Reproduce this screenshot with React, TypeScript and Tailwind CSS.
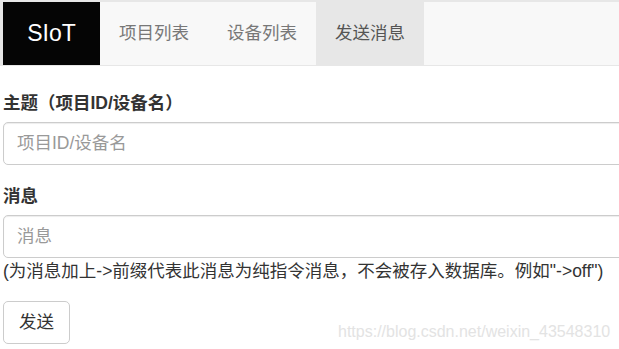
import React from "react";

const font = { fontFamily: '"Liberation Sans", Arial, "Noto Sans CJK SC", sans-serif' };

export default function App() {
  const tabs = ["项目列表", "设备列表", "发送消息"];
  return (
    <div className="relative w-[619px] h-[349px] overflow-hidden bg-white text-[#333]" style={font}>
      {/* navbar */}
      <div className="flex h-[66px] bg-[#f8f8f8] border-t-2 border-b border-l-[3px] border-[#e7e7e7]">
        <div className="flex w-[97px] items-center justify-center bg-[#050505] text-[23px] text-white">SIoT</div>
        {tabs.map((t, i) => (
          <div
            key={t}
            className={
              i === 2
                ? "flex w-[108px] items-center justify-center bg-[#e7e7e7] text-[17.5px] text-[#555]"
                : "flex w-[108px] items-center justify-center text-[17.5px] text-[#777]"
            }
          >
            {t}
          </div>
        ))}
      </div>

      <div className="flex flex-col px-[3px] pt-[25px]">
        <label className="mb-[6px] text-[17.5px] font-bold leading-[25px]">主题（项目ID/设备名）</label>
        <input
          className="h-[43px] w-[700px] rounded-[5px] border border-[#ccc] px-[13px] text-[17.5px] shadow-[inset_0_1px_1px_rgba(0,0,0,0.075)] outline-none placeholder:text-[#999]"
          placeholder="项目ID/设备名"
        />
        <label className="mb-[6px] mt-[19px] text-[17.5px] font-bold leading-[25px]">消息</label>
        <input
          className="h-[43px] w-[700px] rounded-[5px] border border-[#ccc] px-[13px] text-[17.5px] shadow-[inset_0_1px_1px_rgba(0,0,0,0.075)] outline-none placeholder:text-[#999]"
          placeholder="消息"
        />
        <p className="mt-[1px] whitespace-nowrap text-[17.5px] leading-[25px]">
          (为消息加上-&gt;前缀代表此消息为纯指令消息，不会被存入数据库。例如"-&gt;off")
        </p>
        <div className="mt-[17px]">
          <button className="h-[43px] rounded-[5px] border border-[#ccc] bg-white px-[15px] text-[17.5px] text-[#333]">
            发送
          </button>
        </div>
      </div>

      <div className="absolute left-[338px] top-[320px] text-[16px] text-[#e3e3e3]">
        https://blog.csdn.net/weixin_43548310
      </div>
    </div>
  );
}
